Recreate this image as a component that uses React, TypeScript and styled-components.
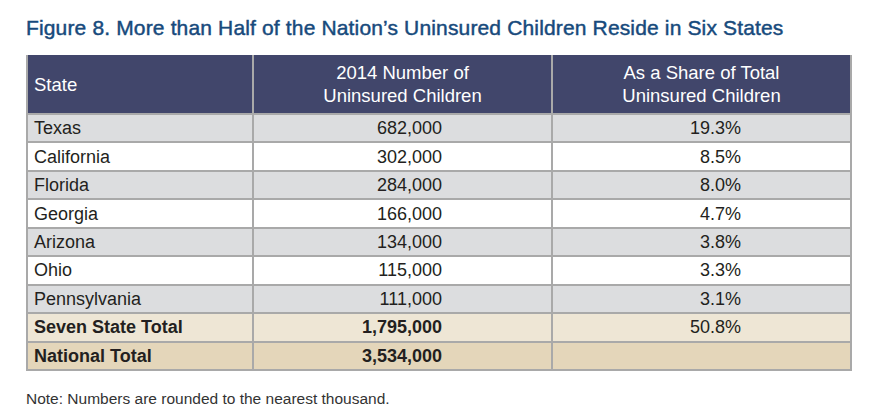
import React from "react";
import styled, { createGlobalStyle } from "styled-components";

const GlobalStyle = createGlobalStyle`
  html, body { margin: 0; padding: 0; background: #ffffff; }
  body { font-family: "Liberation Sans", Arial, Helvetica, sans-serif; }
`;

const Page = styled.div`
  width: 880px;
  height: 412px;
  box-sizing: border-box;
  padding: 16px 0 0 26px;
  display: flex;
  flex-direction: column;
`;

const Title = styled.h1`
  margin: 0;
  font-size: 21px;
  line-height: 24px;
  font-weight: 400;
  letter-spacing: 0.15px;
  color: #174a7c;
  -webkit-text-stroke: 0.45px #174a7c;
  white-space: nowrap;
`;

const Table = styled.table`
  margin-top: 15px;
  width: 824px;
  border-collapse: collapse;
  table-layout: fixed;
  border-left: 2px solid #a9a9a9;
  border-right: 2px solid #a9a9a9;
  border-bottom: 2px solid #a9a9a9;
  color: #231f20;
  font-size: 18px;
`;

const HeadCell = styled.th<{ $align: "left" | "center" }>`
  background: #41466b;
  color: #ffffff;
  font-weight: 400;
  font-size: 18.5px;
  height: 58px;
  padding: 0 6px;
  line-height: 23px;
  text-align: ${(p) => p.$align};
  border-left: 2px solid #a9a9a9;
  &:first-child { border-left: none; }
`;

type RowKind = "gray" | "white" | "tan" | "sand";

const rowBg: Record<RowKind, string> = {
  gray: "#dcdddf",
  white: "#ffffff",
  tan: "#eee6d5",
  sand: "#e4d6ba",
};

const Row = styled.tr<{ $kind: RowKind }>`
  background: ${(p) => rowBg[p.$kind]};
  height: 28.44px;
  font-weight: ${(p) => (p.$kind === "tan" || p.$kind === "sand" ? 700 : 400)};
`;

const Cell = styled.td<{ $align: "left" | "right" }>`
  padding: 0 ${(p) => (p.$align === "right" ? "109px" : "6px")} 0 6px;
  text-align: ${(p) => p.$align};
  border-top: 2px solid #a9a9a9;
  border-left: 2px solid #a9a9a9;
  line-height: 20px;
  white-space: nowrap;
  &:first-child { border-left: none; }
`;

const PercentCell = styled(Cell)`
  font-weight: 400;
`;

const Note = styled.p`
  margin: 18px 0 0;
  font-size: 15.5px;
  line-height: 19px;
  color: #333333;
`;

const rows: { state: string; num: string; pct: string; kind: RowKind }[] = [
  { state: "Texas", num: "682,000", pct: "19.3%", kind: "gray" },
  { state: "California", num: "302,000", pct: "8.5%", kind: "white" },
  { state: "Florida", num: "284,000", pct: "8.0%", kind: "gray" },
  { state: "Georgia", num: "166,000", pct: "4.7%", kind: "white" },
  { state: "Arizona", num: "134,000", pct: "3.8%", kind: "gray" },
  { state: "Ohio", num: "115,000", pct: "3.3%", kind: "white" },
  { state: "Pennsylvania", num: "111,000", pct: "3.1%", kind: "gray" },
  { state: "Seven State Total", num: "1,795,000", pct: "50.8%", kind: "tan" },
  { state: "National Total", num: "3,534,000", pct: "", kind: "sand" },
];

export default function App() {
  return (
    <>
      <GlobalStyle />
      <Page>
        <Title>Figure 8. More than Half of the Nation’s Uninsured Children Reside in Six States</Title>
        <Table>
          <colgroup>
            <col style={{ width: 226 }} />
            <col style={{ width: 299 }} />
            <col style={{ width: 299 }} />
          </colgroup>
          <thead>
            <tr>
              <HeadCell $align="left">State</HeadCell>
              <HeadCell $align="center">
                2014 Number of
                <br />
                Uninsured Children
              </HeadCell>
              <HeadCell $align="center">
                As a Share of Total
                <br />
                Uninsured Children
              </HeadCell>
            </tr>
          </thead>
          <tbody>
            {rows.map((r) => (
              <Row key={r.state} $kind={r.kind}>
                <Cell $align="left">{r.state}</Cell>
                <Cell $align="right">{r.num}</Cell>
                <PercentCell $align="right">{r.pct}</PercentCell>
              </Row>
            ))}
          </tbody>
        </Table>
        <Note>Note: Numbers are rounded to the nearest thousand.</Note>
      </Page>
    </>
  );
}
